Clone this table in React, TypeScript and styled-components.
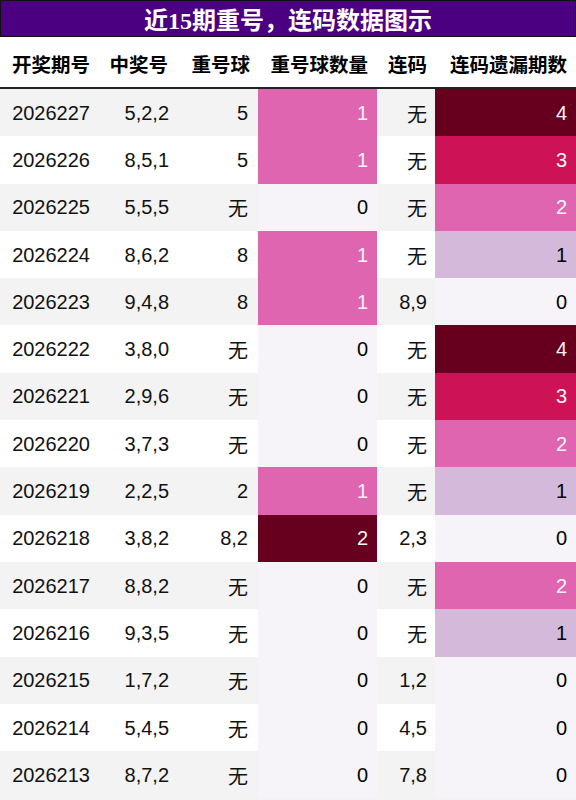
import React from "react";
import styled, { createGlobalStyle } from "styled-components";

type Row = {
  issue: string;
  win: string;
  repeat: string;
  repeatCount: number;
  link: string;
  linkMiss: number;
};

const rows: Row[] = [
  { issue: "2026227", win: "5,2,2", repeat: "5", repeatCount: 1, link: "无", linkMiss: 4 },
  { issue: "2026226", win: "8,5,1", repeat: "5", repeatCount: 1, link: "无", linkMiss: 3 },
  { issue: "2026225", win: "5,5,5", repeat: "无", repeatCount: 0, link: "无", linkMiss: 2 },
  { issue: "2026224", win: "8,6,2", repeat: "8", repeatCount: 1, link: "无", linkMiss: 1 },
  { issue: "2026223", win: "9,4,8", repeat: "8", repeatCount: 1, link: "8,9", linkMiss: 0 },
  { issue: "2026222", win: "3,8,0", repeat: "无", repeatCount: 0, link: "无", linkMiss: 4 },
  { issue: "2026221", win: "2,9,6", repeat: "无", repeatCount: 0, link: "无", linkMiss: 3 },
  { issue: "2026220", win: "3,7,3", repeat: "无", repeatCount: 0, link: "无", linkMiss: 2 },
  { issue: "2026219", win: "2,2,5", repeat: "2", repeatCount: 1, link: "无", linkMiss: 1 },
  { issue: "2026218", win: "3,8,2", repeat: "8,2", repeatCount: 2, link: "2,3", linkMiss: 0 },
  { issue: "2026217", win: "8,8,2", repeat: "无", repeatCount: 0, link: "无", linkMiss: 2 },
  { issue: "2026216", win: "9,3,5", repeat: "无", repeatCount: 0, link: "无", linkMiss: 1 },
  { issue: "2026215", win: "1,7,2", repeat: "无", repeatCount: 0, link: "1,2", linkMiss: 0 },
  { issue: "2026214", win: "5,4,5", repeat: "无", repeatCount: 0, link: "4,5", linkMiss: 0 },
  { issue: "2026213", win: "8,7,2", repeat: "无", repeatCount: 0, link: "7,8", linkMiss: 0 },
];

// PuRd 색상표 (0 ~ 1)
const purd = (t: number) => {
  if (t <= 0) return "#f7f4f9";
  if (t <= 0.25) return "#d4b9da";
  if (t <= 0.5) return "#df65b0";
  if (t <= 0.75) return "#ce1256";
  return "#67001f";
};

const heat = (value: number, max: number) => {
  const t = value / max;
  return { bg: purd(t), fg: t >= 0.5 ? "#f4f4f4" : "#000000" };
};

const App: React.FC = () => {
  return (
    <>
      <GlobalStyle />
      <Page>
        <Title>近15期重号，连码数据图示</Title>
        <Table>
          <colgroup>
            <col style={{ width: 100 }} />
            <col style={{ width: 80 }} />
            <col style={{ width: 78 }} />
            <col style={{ width: 119 }} />
            <col style={{ width: 58 }} />
            <col style={{ width: 141 }} />
          </colgroup>
          <thead>
            <tr>
              <Th $pr={10}>开奖期号</Th>
              <Th $pr={12}>中奖号</Th>
              <Th $pr={8}>重号球</Th>
              <Th $pr={9}>重号球数量</Th>
              <Th $pr={8}>连码</Th>
              <Th $pr={9}>连码遗漏期数</Th>
            </tr>
          </thead>
          <tbody>
            {rows.map((row, i) => {
              const rc = heat(row.repeatCount, 2);
              const lm = heat(row.linkMiss, 4);
              return (
                <Tr key={row.issue} $odd={i % 2 === 0}>
                  <Td $pr={10}>{row.issue}</Td>
                  <Td $pr={11}>{row.win}</Td>
                  <Td $pr={10}>{row.repeat}</Td>
                  <HeatTd $bg={rc.bg} $fg={rc.fg} $pr={9}>{row.repeatCount}</HeatTd>
                  <Td $pr={8}>{row.link}</Td>
                  <HeatTd $bg={lm.bg} $fg={lm.fg} $pr={9}>{row.linkMiss}</HeatTd>
                </Tr>
              );
            })}
          </tbody>
        </Table>
      </Page>
    </>
  );
};

export default App;

const GlobalStyle = createGlobalStyle`
  html, body {
    margin: 0;
    padding: 0;
    background: #ffffff;
  }
  body {
    font-family: "Liberation Sans", "Noto Sans CJK SC", sans-serif;
  }
`;

const Page = styled.div`
  width: 576px;
  height: 800px;
  overflow: hidden;
  background: #f3f3f3;
`;

const Title = styled.div`
  height: 35px;
  display: flex;
  align-items: center;
  justify-content: center;
  background: #4b0082;
  border: 1px solid #111;
  color: #ffffff;
  font-family: "Liberation Serif", "Noto Sans CJK SC", serif;
  font-size: 24px;
  font-weight: 700;
`;

const Table = styled.table`
  width: 576px;
  table-layout: fixed;
  border-collapse: separate;
  border-spacing: 0;
`;

const Th = styled.th<{ $pr: number }>`
  height: 52px;
  padding: 3px ${({ $pr }) => $pr}px 0 0;
  box-sizing: border-box;
  background: #ffffff;
  border-bottom: 2px solid #222;
  text-align: right;
  font-family: "Noto Sans CJK SC", sans-serif;
  font-size: 19.5px;
  font-weight: 700;
  color: #000;
  white-space: nowrap;
`;

const Tr = styled.tr<{ $odd: boolean }>`
  height: 47.3px;
  background: ${({ $odd }) => ($odd ? "#f3f3f3" : "#ffffff")};
`;

const Td = styled.td<{ $pr: number }>`
  padding: 1px ${({ $pr }) => $pr}px 0 0;
  text-align: right;
  font-size: 20px;
  color: #111;
  white-space: nowrap;
`;

const HeatTd = styled(Td)<{ $bg: string; $fg: string }>`
  background: ${({ $bg }) => $bg};
  color: ${({ $fg }) => $fg};
`;
